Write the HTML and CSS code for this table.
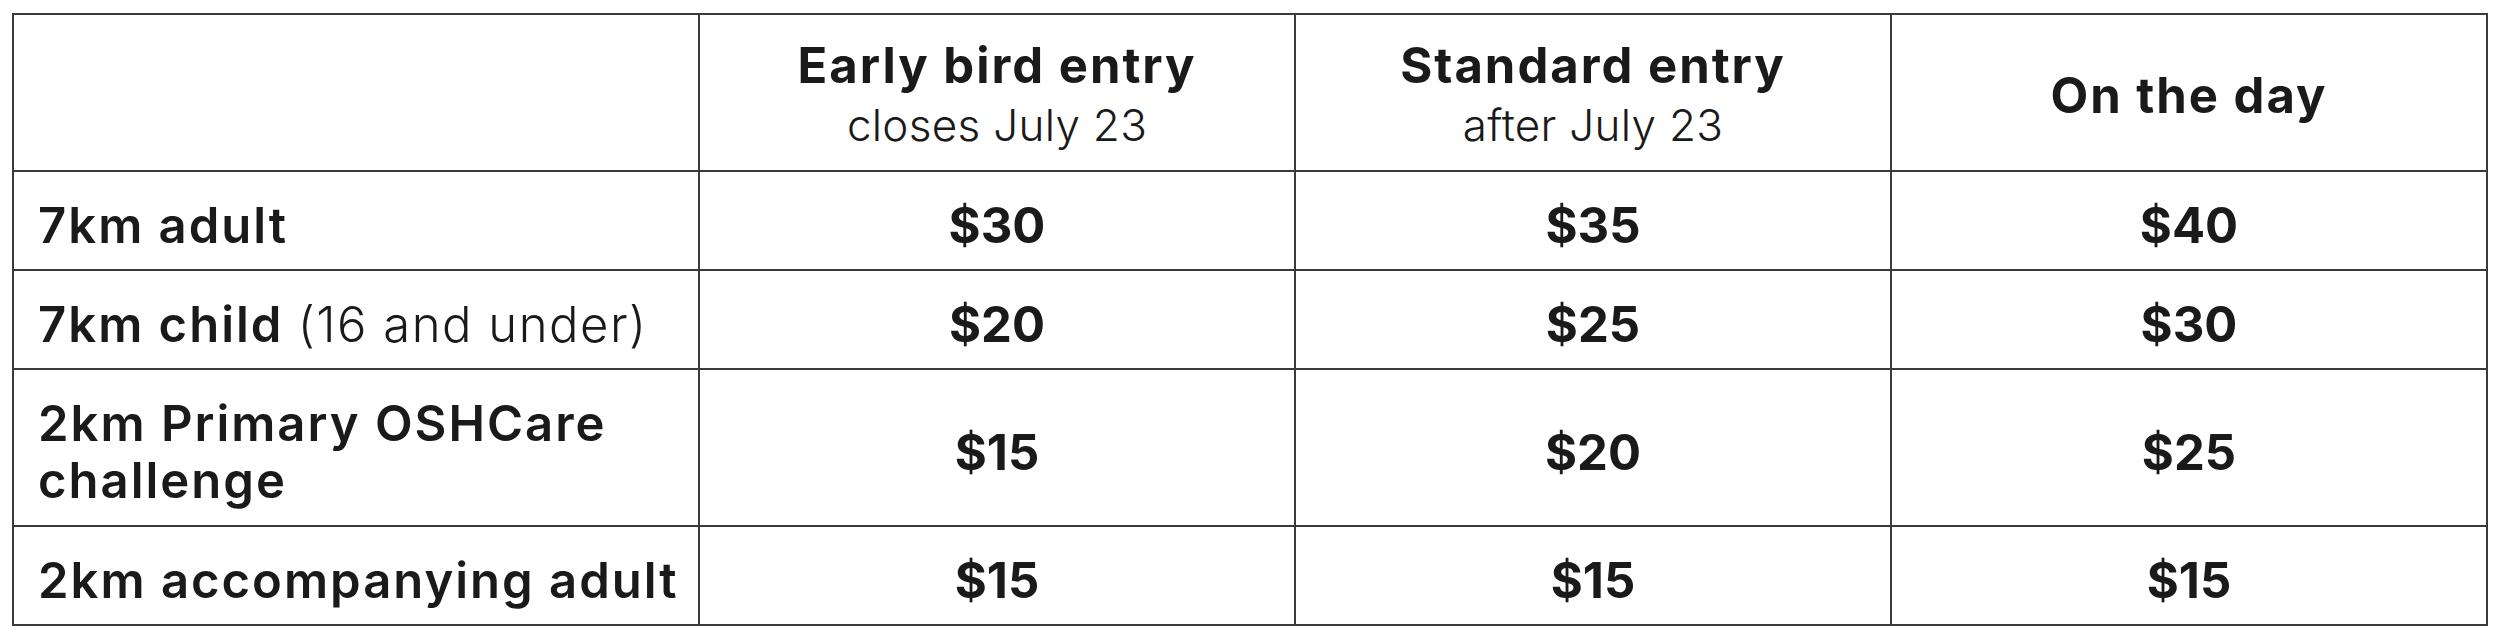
FILE: index.html
```html
<!DOCTYPE html>
<html>
<head>
<meta charset="utf-8">
<link rel="stylesheet" href="styles.css">
</head>
<body>
<table class="fees">
  <colgroup>
    <col class="c-label">
    <col class="c-price">
    <col class="c-price">
    <col class="c-price">
  </colgroup>
  <thead>
    <tr class="r-head">
      <th></th>
      <th><span class="h-main">Early bird entry</span><span class="h-sub">closes July 23</span></th>
      <th><span class="h-main">Standard entry</span><span class="h-sub">after July 23</span></th>
      <th><span class="h-main">On the day</span></th>
    </tr>
  </thead>
  <tbody>
    <tr class="r-one">
      <td class="label">7km adult</td>
      <td class="price">$30</td>
      <td class="price">$35</td>
      <td class="price">$40</td>
    </tr>
    <tr class="r-one">
      <td class="label">7km child <span class="note">(16 and under)</span></td>
      <td class="price">$20</td>
      <td class="price">$25</td>
      <td class="price">$30</td>
    </tr>
    <tr class="r-two">
      <td class="label">2km Primary OSHCare<br>challenge</td>
      <td class="price">$15</td>
      <td class="price">$20</td>
      <td class="price">$25</td>
    </tr>
    <tr class="r-one">
      <td class="label">2km accompanying adult</td>
      <td class="price">$15</td>
      <td class="price">$15</td>
      <td class="price">$15</td>
    </tr>
  </tbody>
</table>
</body>
</html>
```
FILE: styles.css
```css
html, body {
  margin: 0;
  padding: 0;
  background: #ffffff;
}
body {
  padding: 13px 0 0 12px;
  font-family: "Inter", "Open Sans", "Liberation Sans", sans-serif;
  color: #1a1a1a;
}
.fees {
  border-collapse: collapse;
  table-layout: fixed;
  width: 2474px;
}
.c-label { width: 686px; }
.c-price { width: 596px; }
.fees th,
.fees td {
  border: 2px solid #3b3b3b;
  padding: 9px 12px 0 24px;
  vertical-align: middle;
  font-size: 49px;
  line-height: 57px;
  white-space: nowrap;
}
.r-head { height: 157px; }
.r-one { height: 99px; }
.r-two { height: 157px; }
.fees th {
  text-align: center;
  font-weight: 700;
  padding: 6px 12px 0 12px;
}
.h-main {
  display: block;
  font-weight: 700;
  letter-spacing: 2px;
}
.h-sub {
  display: block;
  margin-top: 3px;
  font-size: 44px;
  font-weight: 300;
  letter-spacing: 0.3px;
}
.label {
  text-align: left;
  font-weight: 600;
  letter-spacing: 2px;
}
.note {
  font-weight: 300;
  letter-spacing: 1.5px;
}
.price {
  text-align: center;
  font-weight: 700;
  font-size: 47px;
}
.fees td.price {
  padding-left: 12px;
  padding-right: 12px;
}
```
